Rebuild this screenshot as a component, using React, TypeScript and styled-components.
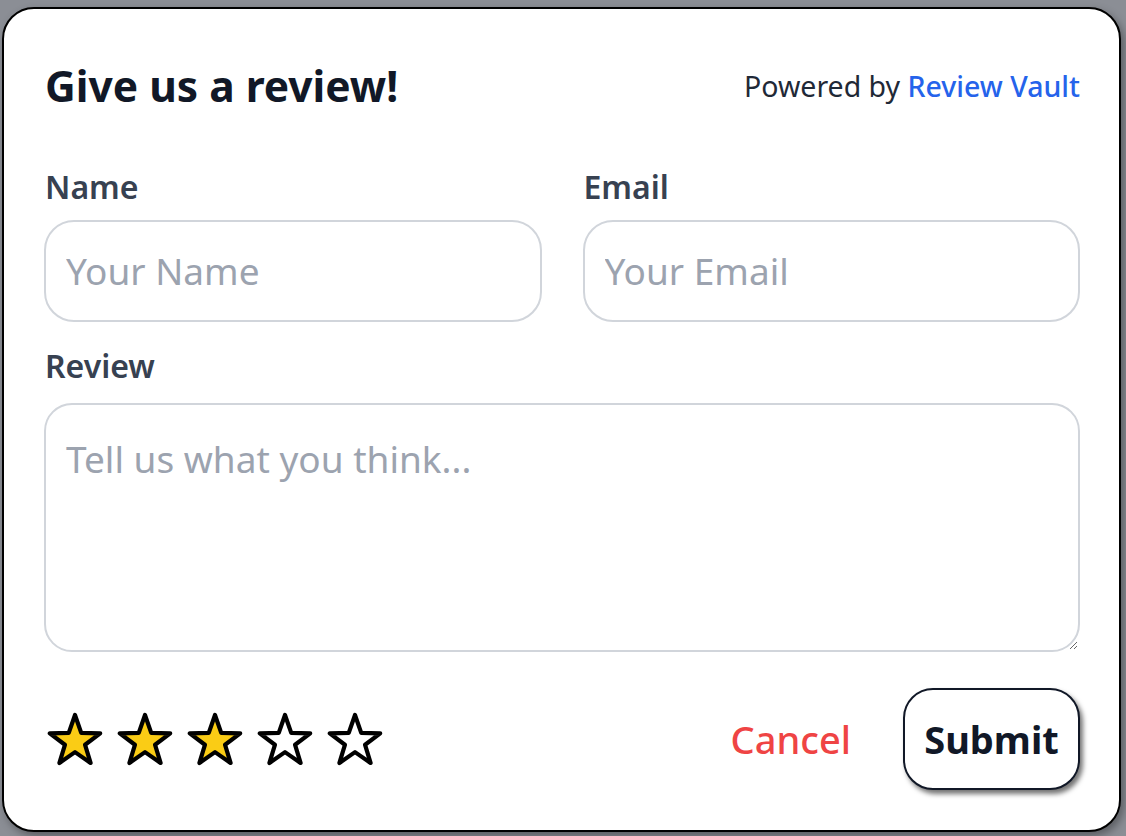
import React from "react";
import styled, { createGlobalStyle } from "styled-components";

const GlobalStyle = createGlobalStyle`
  html, body { margin: 0; padding: 0; background: #8b8e95; }
  body { font-family: "Noto Sans", "Open Sans", sans-serif; }
  *, *::before, *::after { box-sizing: border-box; }
`;

const Page = styled.div`
  width: 1126px;
  height: 836px;
  padding: 7px 5px 4px 2px;
`;

const Card = styled.form`
  width: 1119px;
  background: #ffffff;
  border: 2px solid #000000;
  border-radius: 32px;
  padding: 56px 39px 40px 40px;
  display: flex;
  flex-direction: column;
  box-shadow: 3px 4px 8px rgba(0, 0, 0, 0.35);
`;

const Header = styled.header`
  display: flex;
  justify-content: space-between;
  align-items: center;
  padding-left: 1px;
`;

const Title = styled.h1`
  margin: 0;
  font-size: 42.5px;
  line-height: 1;
  font-weight: 700;
  color: #111827;
`;

const Powered = styled.p`
  margin: 0;
  font-size: 28.5px;
  line-height: 1;
  color: #1f2937;
`;

const Brand = styled.a`
  color: #2563eb;
  font-weight: 500;
  text-decoration: none;
`;

const FieldGrid = styled.div`
  display: grid;
  grid-template-columns: 1fr 1fr;
  column-gap: 41px;
  margin-top: 63px;
`;

const Field = styled.label<{ $gap: number }>`
  display: flex;
  flex-direction: column;
  gap: ${(p) => p.$gap}px;
`;

const ReviewField = styled(Field)`
  margin-top: 28.6px;
`;

const Label = styled.span`
  font-size: 32px;
  line-height: 1;
  font-weight: 600;
  color: #374151;
  padding-left: 1px;
`;

const TextInput = styled.input`
  width: 100%;
  height: 102px;
  border: 2px solid #d1d5db;
  border-radius: 30px;
  padding: 0 20px;
  font-family: inherit;
  font-size: 37px;
  color: #111827;
  background: #fff;
  outline: none;
  &::placeholder { color: #9ca3af; }
`;

const TextArea = styled.textarea`
  width: 100%;
  height: 249px;
  border: 2px solid #d1d5db;
  border-radius: 28px;
  padding: 28px 20px 12px;
  font-family: inherit;
  font-size: 37px;
  line-height: 1.4;
  color: #111827;
  background: #fff;
  outline: none;
  resize: vertical;
  &::placeholder { color: #9ca3af; }
`;

const Footer = styled.div`
  display: flex;
  justify-content: space-between;
  align-items: center;
  margin-top: 36px;
`;

const Stars = styled.div`
  display: flex;
  gap: 12px;
  margin-left: 2px;
`;

const Actions = styled.div`
  display: flex;
  align-items: center;
  gap: 52px;
`;

const CancelButton = styled.button`
  border: none;
  background: none;
  padding: 0;
  font-family: inherit;
  font-size: 38px;
  font-weight: 500;
  color: #ef4444;
  cursor: pointer;
`;

const SubmitButton = styled.button`
  width: 177px;
  height: 102px;
  border: 2px solid #111827;
  border-radius: 30px;
  background: #ffffff;
  font-family: inherit;
  font-size: 38px;
  font-weight: 700;
  color: #111827;
  box-shadow: 3px 4px 5px rgba(0, 0, 0, 0.55);
  cursor: pointer;
`;

const starPoints = (() => {
  const cx = 29;
  const cy = 30.5;
  const R = 26.5;
  const r = R * 0.4;
  const pts: string[] = [];
  for (let k = 0; k < 10; k++) {
    const rho = k % 2 === 0 ? R : r;
    const a = (k * 36 * Math.PI) / 180;
    pts.push(`${(cx + rho * Math.sin(a)).toFixed(2)},${(cy - rho * Math.cos(a)).toFixed(2)}`);
  }
  return pts.join(" ");
})();

const Star = ({ filled }: { filled: boolean }) => (
  <svg width="58" height="56" viewBox="0 0 58 56" aria-hidden="true">
    <polygon
      points={starPoints}
      fill={filled ? "#facc15" : "#ffffff"}
      stroke="#000000"
      strokeWidth="4.2"
      strokeLinejoin="round"
    />
  </svg>
);

export default function App() {
  const rating = 3;
  return (
    <>
      <GlobalStyle />
      <Page>
        <Card onSubmit={(e) => e.preventDefault()}>
          <Header>
            <Title>Give us a review!</Title>
            <Powered>
              Powered by <Brand href="#">Review Vault</Brand>
            </Powered>
          </Header>
          <FieldGrid>
            <Field $gap={17.4}>
              <Label>Name</Label>
              <TextInput placeholder="Your Name" />
            </Field>
            <Field $gap={17.4}>
              <Label>Email</Label>
              <TextInput placeholder="Your Email" />
            </Field>
          </FieldGrid>
          <ReviewField $gap={20.4}>
            <Label>Review</Label>
            <TextArea placeholder="Tell us what you think..." />
          </ReviewField>
          <Footer>
            <Stars>
              {[1, 2, 3, 4, 5].map((i) => (
                <Star key={i} filled={i <= rating} />
              ))}
            </Stars>
            <Actions>
              <CancelButton type="button">Cancel</CancelButton>
              <SubmitButton type="submit">Submit</SubmitButton>
            </Actions>
          </Footer>
        </Card>
      </Page>
    </>
  );
}
